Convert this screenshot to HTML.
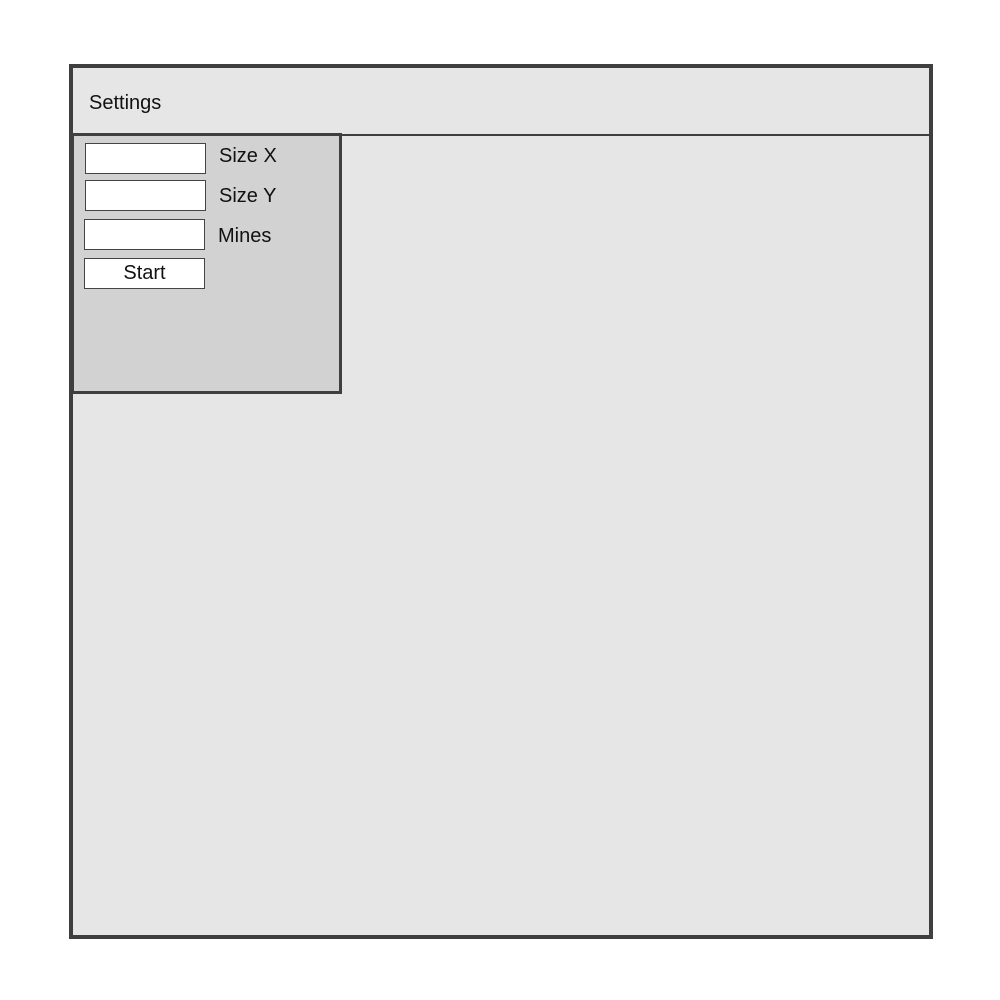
<!DOCTYPE html>
<html><head><style>
body{margin:0;width:1000px;height:1000px;background:#fff;position:relative;font-family:"Liberation Sans",sans-serif;color:#111;}
.a{position:absolute;box-sizing:border-box;}
.in{background:#fff;border:1px solid #444;}
.t{position:absolute;font-size:20px;line-height:24px;}
</style></head><body>
<div class="a" style="left:69px;top:64px;width:864px;height:875px;background:#e6e6e6;border:4px solid #3f3f3f;"></div>
<div class="a" style="left:73px;top:134px;width:856px;height:2px;background:#3f3f3f;"></div>
<div class="t" style="left:89px;top:91px;">Settings</div>
<div class="a" style="left:71px;top:133px;width:271px;height:261px;background:#d2d2d2;border:3px solid #3f3f3f;"></div>
<div class="a in" style="left:85px;top:143px;width:121px;height:31px;"></div>
<div class="a in" style="left:85px;top:180px;width:121px;height:31px;"></div>
<div class="a in" style="left:84px;top:219px;width:121px;height:31px;"></div>
<div class="a in" style="left:84px;top:258px;width:121px;height:31px;text-align:center;font-size:20px;line-height:29px;">Start</div>
<div class="t" style="left:219px;top:144px;">Size X</div>
<div class="t" style="left:219px;top:184px;">Size Y</div>
<div class="t" style="left:218px;top:224px;">Mines</div>
</body></html>
